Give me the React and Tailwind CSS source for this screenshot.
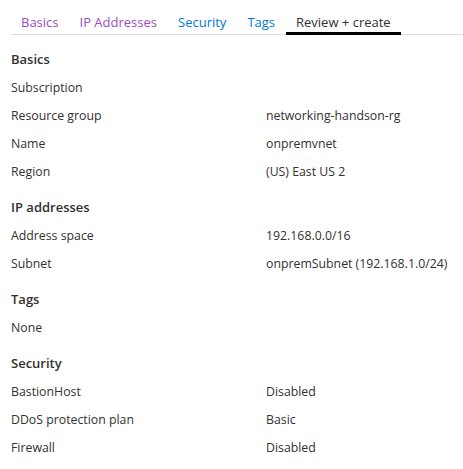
const tabs = [
  { label: "Basics", color: "text-[#9d4cc4]" },
  { label: "IP Addresses", color: "text-[#9d4cc4]" },
  { label: "Security", color: "text-[#0078d4]" },
  { label: "Tags", color: "text-[#0078d4]" },
  { label: "Review + create", color: "text-[#323130]", active: true },
];

const sections = [
  {
    title: "Basics",
    rows: [
      ["Subscription", ""],
      ["Resource group", "networking-handson-rg"],
      ["Name", "onpremvnet"],
      ["Region", "(US) East US 2"],
    ],
  },
  {
    title: "IP addresses",
    rows: [
      ["Address space", "192.168.0.0/16"],
      ["Subnet", "onpremSubnet (192.168.1.0/24)"],
    ],
  },
  {
    title: "Tags",
    rows: [["None", ""]],
  },
  {
    title: "Security",
    rows: [
      ["BastionHost", "Disabled"],
      ["DDoS protection plan", "Basic"],
      ["Firewall", "Disabled"],
    ],
  },
];

export default function App() {
  return (
    <div
      className="w-[463px] h-[469px] bg-white overflow-hidden text-[13px] text-[#323130]"
      style={{ fontFamily: '"Open Sans", "Noto Sans", sans-serif' }}
    >
      <div className="ml-[11px] flex border-b border-[#e1dfdd]">
        {tabs.map((t) => (
          <div
            key={t.label}
            className={`px-[10px] pt-[13px] pb-[1px] mr-[1px] leading-[18px] border-b-[3px] -mb-[1px] ${
              t.active ? "border-black" : "border-transparent"
            } ${t.color}`}
          >
            {t.label}
          </div>
        ))}
      </div>

      <div className="pl-[11px] pt-[11px] text-[12.3px]">
        {sections.map((s, i) => (
          <div key={s.title} className={i > 0 ? "mt-[8px]" : ""}>
            <div className="h-[28px] flex items-center font-semibold text-[13px]">{s.title}</div>
            {s.rows.map(([k, v]) => (
              <div key={k} className="h-[28px] grid grid-cols-[255px_1fr] items-center">
                <span>{k}</span>
                <span>{v}</span>
              </div>
            ))}
          </div>
        ))}
      </div>
    </div>
  );
}
